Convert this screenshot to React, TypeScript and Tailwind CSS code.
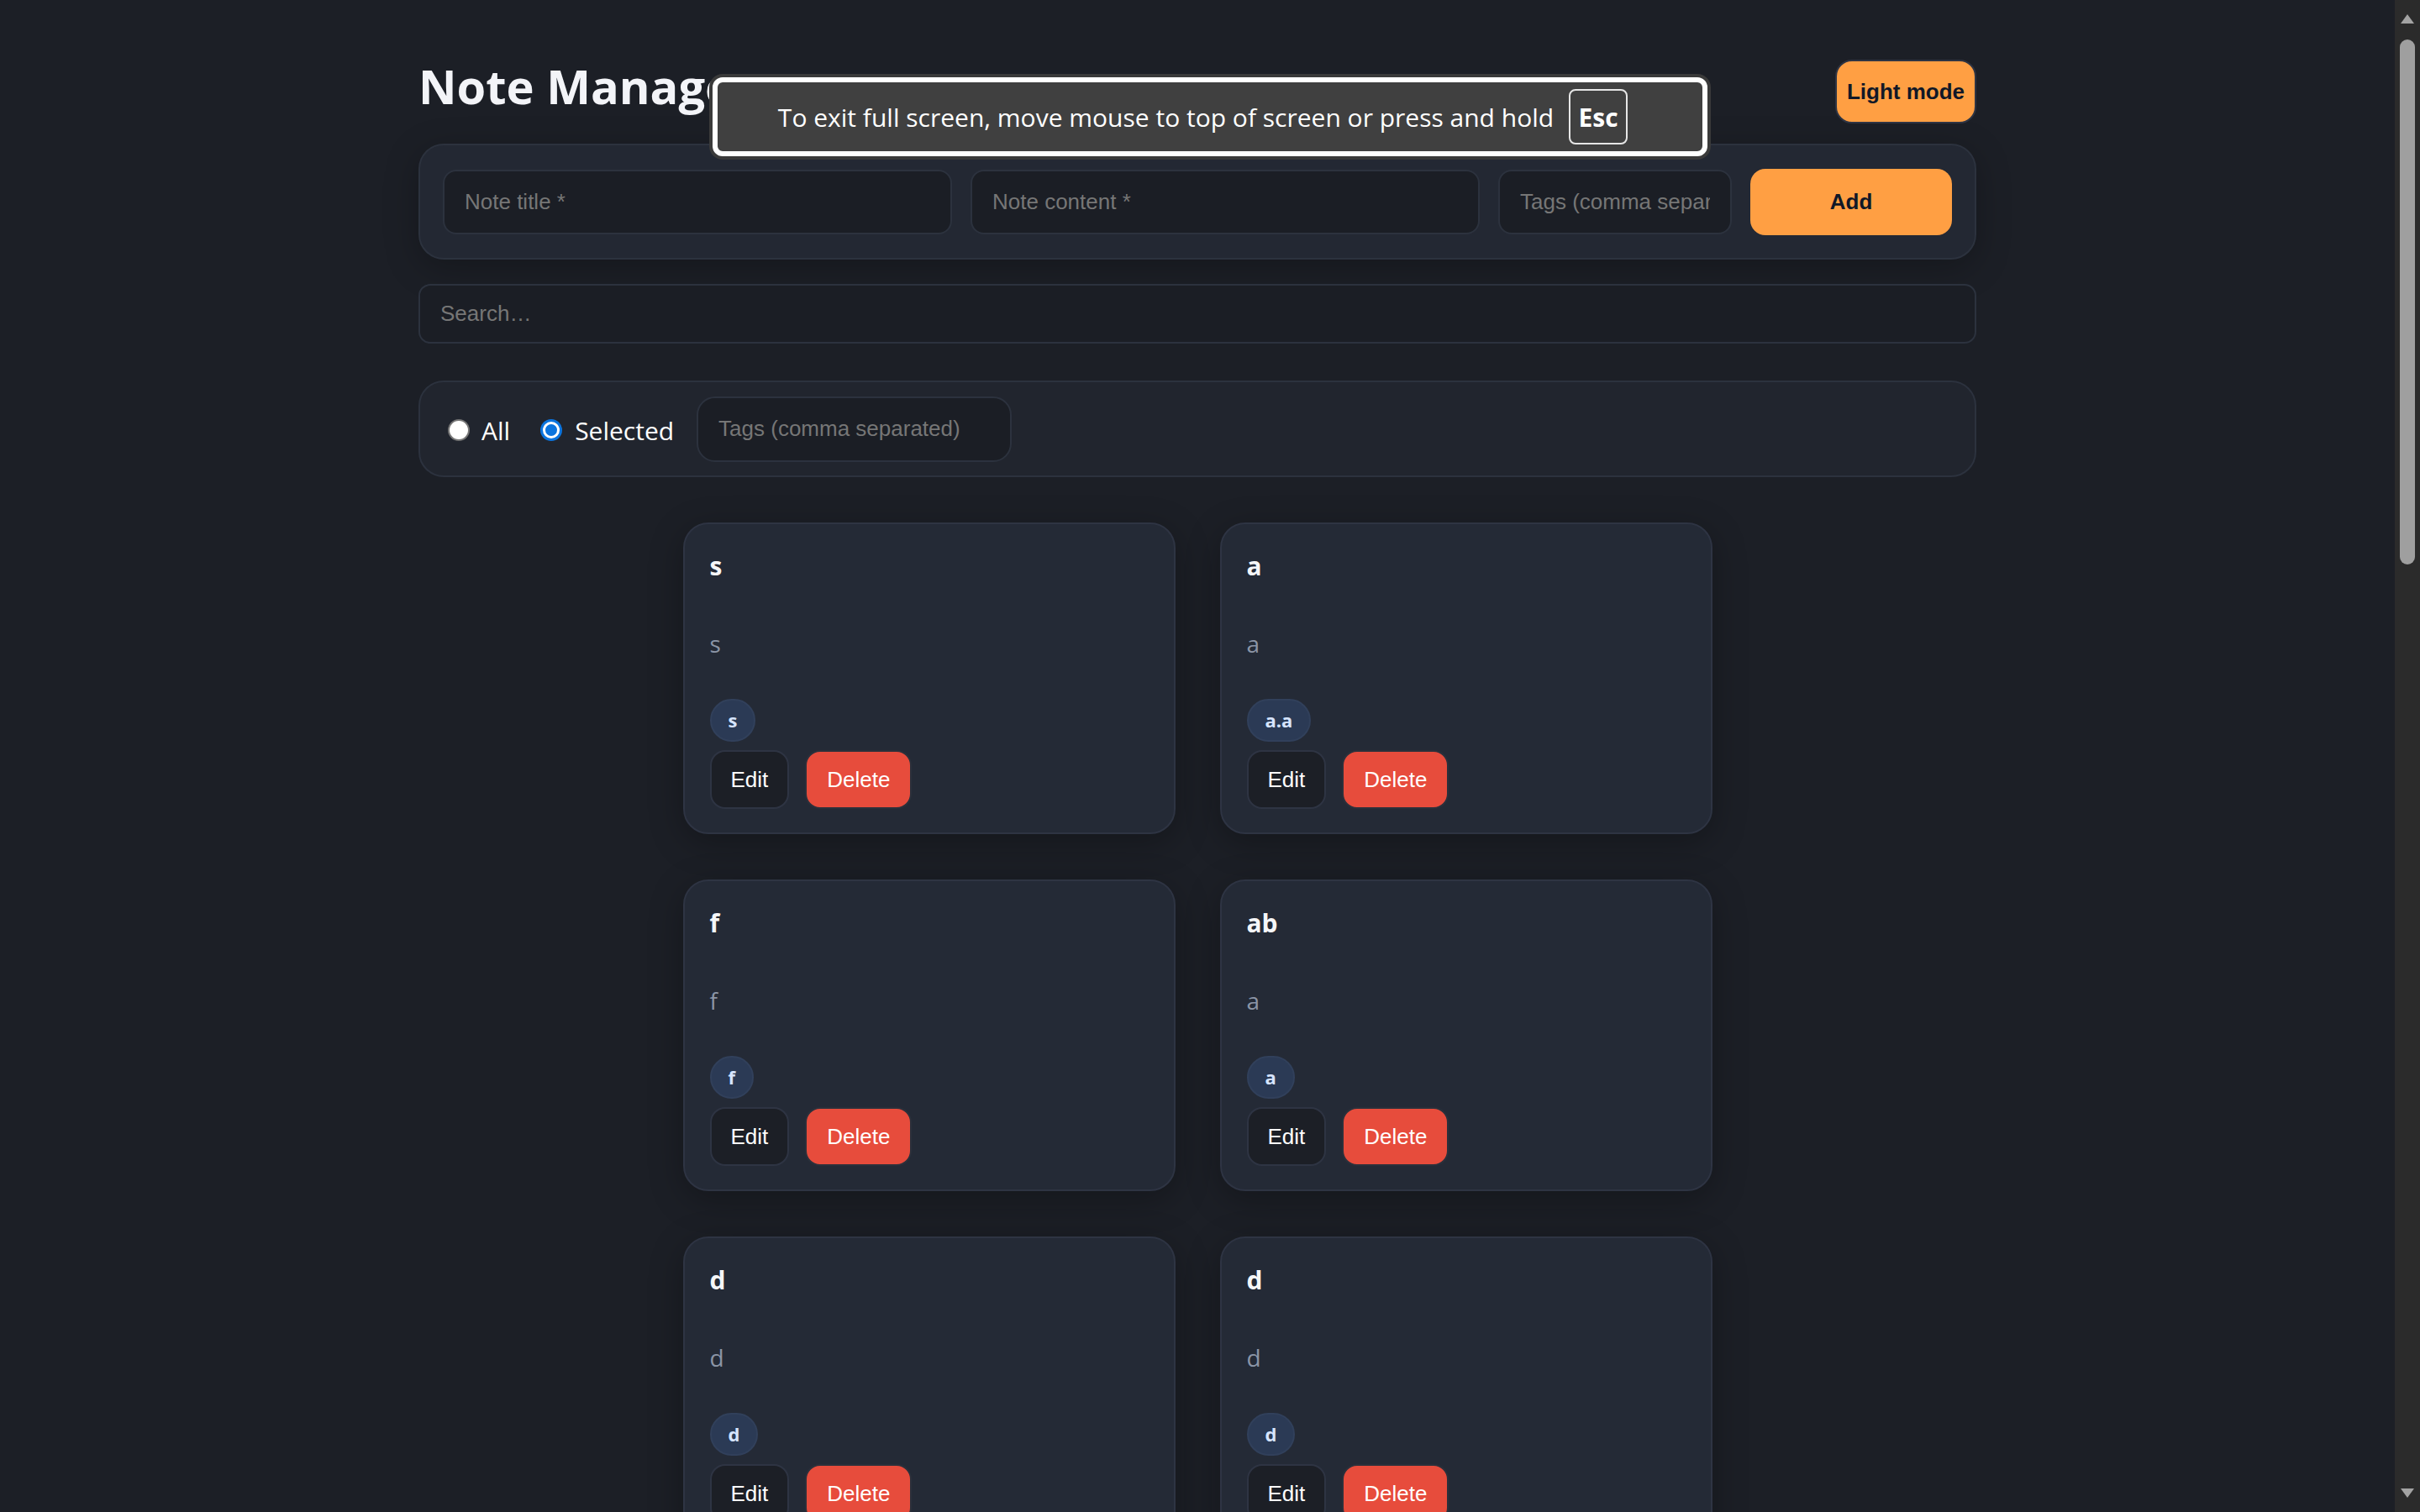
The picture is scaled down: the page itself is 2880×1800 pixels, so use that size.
import { useState } from 'react';

type Note = { id: number; title: string; content: string; tags: string[] };

const initialNotes: Note[] = [
  { id: 1, title: 's', content: 's', tags: ['s'] },
  { id: 2, title: 'a', content: 'a', tags: ['a.a'] },
  { id: 3, title: 'f', content: 'f', tags: ['f'] },
  { id: 4, title: 'ab', content: 'a', tags: ['a'] },
  { id: 5, title: 'd', content: 'd', tags: ['d'] },
  { id: 6, title: 'd', content: 'd', tags: ['d'] },
];

function Radio({ checked }: { checked: boolean }) {
  if (checked) {
    return (
      <span className="w-[26px] h-[26px] rounded-full bg-[#0b74de] p-[3px] flex">
        <span className="flex-1 rounded-full bg-white p-[3px] flex">
          <span className="flex-1 rounded-full bg-[#0b74de]" />
        </span>
      </span>
    );
  }
  return <span className="w-[26px] h-[26px] rounded-full bg-white border-2 border-[#767676]" />;
}

function NoteCard({ note }: { note: Note }) {
  return (
    <div className="bg-[#242a36] border-2 border-[#2e3443] rounded-[30px] px-[30px] pt-[32px] pb-[28px] flex flex-col items-start shadow-[0_10px_40px_rgba(0,0,0,0.28)]">
      <div className="font-['Open_Sans',sans-serif] font-bold text-[30px] leading-[36px] text-[#f5f6f8]">
        {note.title}
      </div>
      <div className="mt-[55px] font-['Open_Sans',sans-serif] text-[28px] leading-[38px] text-[#8b95a6]">
        {note.content}
      </div>
      <div className="mt-[47px] flex gap-2">
        {note.tags.map((t) => (
          <span
            key={t}
            className="h-[51px] px-[20px] rounded-full bg-[#2b3a55] border-2 border-[#31405b] flex items-center font-['Open_Sans',sans-serif] font-bold text-[22px] text-[#d6e4ff]"
          >
            {t}
          </span>
        ))}
      </div>
      <div className="mt-[10px] flex gap-[19px] font-['Liberation_Sans',Arial,sans-serif] text-[26px]">
        <button className="h-[70px] px-[23px] rounded-[18px] bg-[#1c1f26] border-2 border-[#2e3443] text-white">
          Edit
        </button>
        <button className="h-[70px] px-[24px] rounded-[18px] bg-[#e74c3c] border-2 border-[#2b303b] text-white">
          Delete
        </button>
      </div>
    </div>
  );
}

export default function App() {
  const [notes] = useState<Note[]>(initialNotes);
  const [mode, setMode] = useState<'all' | 'selected'>('selected');

  return (
    <div className="h-screen w-full flex overflow-hidden bg-[#1c1f26]">
      <div className="flex-1 overflow-hidden pt-[71px]">
        <div className="w-[1854px] mx-auto">
          <div className="flex justify-between items-start">
            <h1 className="-mt-[7px] font-['Open_Sans',sans-serif] font-bold text-[56px] leading-[76px] text-[#f3f4f8]">
              Note Manager
            </h1>
            <button className="h-[76px] px-[12px] rounded-[20px] bg-[#ff9f43] border-2 border-[#2e3443] font-['Liberation_Sans',Arial,sans-serif] font-bold text-[26px] text-[#111827]">
              Light mode
            </button>
          </div>

          <div className="mt-[24px] bg-[#232833] border-2 border-[#2c323e] rounded-[30px] px-[27px] pt-[28px] pb-[27px] flex items-center gap-[22px] shadow-[0_10px_40px_rgba(0,0,0,0.25)] font-['Liberation_Sans',Arial,sans-serif] text-[26px]">
            <input
              placeholder="Note title *"
              className="flex-1 min-w-0 h-[77px] px-[24px] rounded-[16px] bg-[#1b1e25] border-2 border-[#2c323e] text-white placeholder:text-[#767676] outline-none"
            />
            <input
              placeholder="Note content *"
              className="flex-1 min-w-0 h-[77px] px-[24px] rounded-[16px] bg-[#1b1e25] border-2 border-[#2c323e] text-white placeholder:text-[#767676] outline-none"
            />
            <input
              placeholder="Tags (comma separated)"
              className="w-[278px] h-[77px] px-[24px] rounded-[16px] bg-[#1b1e25] border-2 border-[#2c323e] text-white placeholder:text-[#767676] outline-none"
            />
            <button className="w-[240px] h-[79px] rounded-[18px] bg-[#ff9f43] font-bold text-[#111827]">
              Add
            </button>
          </div>

          <input
            placeholder="Search…"
            className="mt-[29px] w-full h-[71px] px-[24px] rounded-[14px] bg-[#1b1e25] border-2 border-[#2c323e] font-['Liberation_Sans',Arial,sans-serif] text-[26px] text-white placeholder:text-[#767676] outline-none"
          />

          <div className="mt-[44px] h-[115px] bg-[#21252e] border-2 border-[#2c323e] rounded-[30px] pl-[33px] pt-[3px] flex items-center font-['Open_Sans',sans-serif] text-[30px] text-white">
            <label className="flex items-center gap-[14px] cursor-pointer" onClick={() => setMode('all')}>
              <Radio checked={mode === 'all'} />
              <span>All</span>
            </label>
            <label className="ml-[36px] flex items-center gap-[15px] cursor-pointer" onClick={() => setMode('selected')}>
              <Radio checked={mode === 'selected'} />
              <span>Selected</span>
            </label>
            <input
              placeholder="Tags (comma separated)"
              className="ml-[27px] -mt-[3px] w-[375px] h-[78px] px-[24px] rounded-[22px] bg-[#1b1e25] border-2 border-[#2c323e] font-['Liberation_Sans',Arial,sans-serif] text-[26px] placeholder:text-[#767676] outline-none"
            />
          </div>

          <div className="mt-[54px] w-[1225px] mx-auto grid grid-cols-[586px_586px] gap-x-[53px] gap-y-[54px]">
            {notes.map((n) => (
              <NoteCard key={n.id} note={n} />
            ))}
          </div>
        </div>
      </div>

      <div className="w-[30px] bg-[#2b2b2b] flex flex-col items-center">
        <svg width="18" height="13" viewBox="0 0 18 13" className="mt-[16px]">
          <path d="M9 1 L17 12 L1 12 Z" fill="#a3a3a3" strokeLinejoin="round" />
        </svg>
        <div className="mt-[18px] w-[18px] h-[625px] rounded-full bg-[#9f9f9f]" />
        <div className="flex-1" />
        <svg width="18" height="13" viewBox="0 0 18 13" className="mb-[16px]">
          <path d="M1 1 L17 1 L9 12 Z" fill="#a3a3a3" />
        </svg>
      </div>

      <div className="fixed top-[88px] left-1/2 -translate-x-1/2 w-[1192px] h-[102px] bg-[#3a3a3a] p-[4px] rounded-[16px]">
        <div className="h-full border-[6px] border-white rounded-[12px] bg-[#404040] flex items-center justify-center gap-[18px] pr-[17px] font-['Open_Sans',sans-serif] text-white">
          <span className="text-[30px]">To exit full screen, move mouse to top of screen or press and hold</span>
          <span className="w-[70px] h-[66px] border-2 border-[#e6e6e6] rounded-[8px] flex items-center justify-center font-bold text-[30px]">
            Esc
          </span>
        </div>
      </div>
    </div>
  );
}
